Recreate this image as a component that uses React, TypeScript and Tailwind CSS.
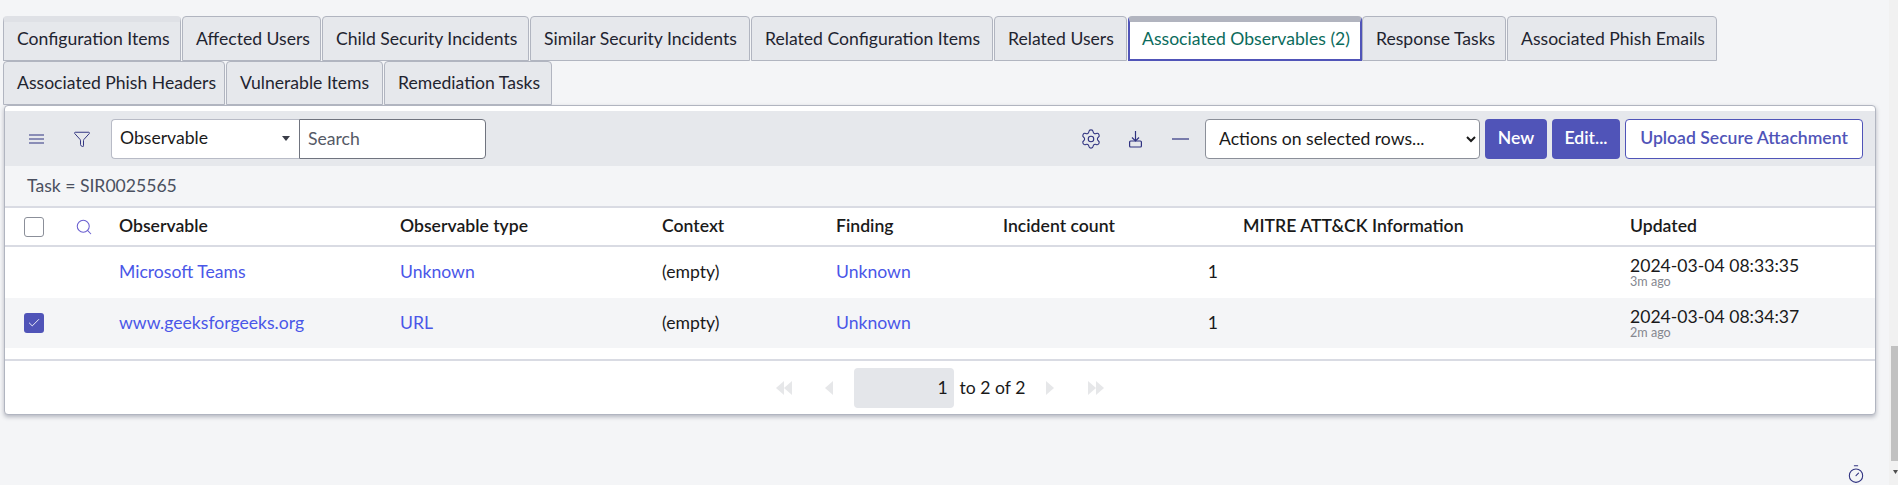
import React from 'react';
import { Funnel, Settings, Search, Timer, Check } from 'lucide-react';

const tabs = [
  { label: 'Configuration Items', width: 'w-[178px]' },
  { label: 'Affected Users', width: 'w-[139px]' },
  { label: 'Child Security Incidents', width: 'w-[207px]' },
  { label: 'Similar Security Incidents', width: 'w-[220px]' },
  { label: 'Related Configuration Items', width: 'w-[242px]' },
  { label: 'Related Users', width: 'w-[133px]' },
  { label: 'Associated Observables (2)', width: 'w-[234px]', active: true },
  { label: 'Response Tasks', width: 'w-[144px]' },
  { label: 'Associated Phish Emails', width: 'w-[210px]' },
  { label: 'Associated Phish Headers', width: 'w-[222px]' },
  { label: 'Vulnerable Items', width: 'w-[157px]' },
  { label: 'Remediation Tasks', width: 'w-[168px]' },
];

const rows = [
  { name: 'Microsoft Teams', type: 'Unknown', date: '2024-03-04 08:33:35', ago: '3m ago', checked: false },
  { name: 'www.geeksforgeeks.org', type: 'URL', date: '2024-03-04 08:34:37', ago: '2m ago', checked: true },
];

const Tab: React.FC<{ label: string; width: string; active?: boolean; first: boolean }> = ({ label, width, active, first }) => {
  if (active) {
    return (
      <div className={`${width} h-[44.5px] flex items-center pl-[12px] pb-[3px] whitespace-nowrap bg-white rounded-t-[4px] border-t-[6px] border-t-[#b1b4bf] border-x-2 border-b-2 border-x-[#5054b8] border-b-[#5054b8] text-[#0b6b5c]`}>
        {label}
      </div>
    );
  }
  return (
    <div
      className={`${width} h-[44.5px] flex items-center pl-[13px] whitespace-nowrap bg-[#e6e8ec] border border-[#b1b5c0] rounded-t-[4px] mr-px text-[#1f2430] ${
        first ? 'border-t-[6px] border-t-[#dfe1e6] pb-[4px]' : 'pt-px'
      }`}
    >
      {label}
    </div>
  );
};

const Triangle: React.FC<{ dir: 'l' | 'r' }> = ({ dir }) => (
  <svg width="8" height="14" viewBox="0 0 8 14" fill="#e6e7e9">
    <path d={dir === 'l' ? 'M8 0v14L0 7z' : 'M0 0v14l8-7z'} />
  </svg>
);

export default function App() {
  return (
    <div
      className="relative h-[485px] overflow-hidden bg-[#f4f5f7] flex text-[17.6px] text-[#1a1a1a]"
      style={{ fontFamily: 'Lato, "Noto Sans", sans-serif' }}
    >
      <div className="flex-1 pt-4 pl-[3px] pr-[13px]">
        <div className="flex flex-wrap">
          {tabs.map((t, i) => (
            <Tab key={t.label} label={t.label} width={t.width} active={t.active} first={i === 0} />
          ))}
        </div>

        <div className="ml-px bg-white border border-[#b1b5c0] rounded-[4px] shadow-[0_2px_4px_rgba(60,65,90,0.35)] h-[310px] pt-[5px]">
          <div className="h-[55px] bg-[#e6e8ec] flex items-center pr-[12px]">
            <svg className="ml-[24px] text-[#2f3280]" width="15" height="10" viewBox="0 0 15 10" fill="none" stroke="currentColor" strokeWidth="1.2">
              <path d="M0 1h15M0 5h15M0 9h15" />
            </svg>
            <Funnel className="ml-[29px] w-[18px] h-[18px] text-[#2f3280]" strokeWidth={1.3} />
            <div className="ml-[20px] w-[188px] h-10 bg-white border border-[#b8bbc6] border-r-0 rounded-l-[4px] flex items-center justify-between pl-2 pr-[9px]">
              <span>Observable</span>
              <svg width="8" height="5" viewBox="0 0 8 5" fill="#3a3d48">
                <path d="M0 0h8L4 5z" />
              </svg>
            </div>
            <input
              placeholder="Search"
              className="w-[187px] h-10 bg-white border border-[#70747f] rounded-r-[4px] px-2 outline-none placeholder:text-[#555a66]"
            />
            <div className="ml-auto flex items-center">
              <Settings className="w-[22px] h-[22px] text-[#2f3280]" strokeWidth={1.2} />
              <svg className="ml-[26px] text-[#2f3280]" width="15" height="18" viewBox="0 0 15 18" fill="none" stroke="currentColor" strokeWidth="1.2">
                <path d="M7.5 1v10M4 7.5l3.5 3.5L11 7.5" />
                <rect x="1.6" y="11" width="11.8" height="6" rx="1" />
              </svg>
              <svg className="ml-[29px] text-[#2f3280]" width="17" height="2" viewBox="0 0 17 2" stroke="currentColor" strokeWidth="1.2">
                <path d="M0 1h17" />
              </svg>
              <select className="ml-[16px] w-[275px] h-10 bg-white border border-[#8b8f99] rounded-[4px] pl-[9px] pr-[10px] text-[#1a1a1a]" defaultValue="a">
                <option value="a">Actions on selected rows...</option>
              </select>
              <button className="ml-[5px] w-[62px] h-10 bg-[#5054b8] text-white font-semibold rounded-[4px]">New</button>
              <button className="ml-[5px] w-[68px] h-10 bg-[#5054b8] text-white font-semibold rounded-[4px]">Edit...</button>
              <button className="ml-[5px] w-[238px] h-10 bg-white border border-[#5054b8] text-[#5054b8] font-semibold rounded-[4px]">
                Upload Secure Attachment
              </button>
            </div>
          </div>

          <div className="h-10 bg-[#f4f5f7] flex items-center pl-[22px] text-[#4a5060]">Task = SIR0025565</div>

          <table className="w-full table-fixed border-collapse">
            <colgroup>
              <col className="w-[58px]" />
              <col className="w-[44px]" />
              <col className="w-[281px]" />
              <col className="w-[262px]" />
              <col className="w-[174px]" />
              <col className="w-[167px]" />
              <col className="w-[240px]" />
              <col className="w-[387px]" />
              <col />
            </colgroup>
            <thead>
              <tr className="h-[39px] border-y-2 border-[#d9dbe3] text-left">
                <th className="pl-[19px]">
                  <div className="w-5 h-5 bg-white border border-[#8b8f99] rounded-[3px]" />
                </th>
                <th className="pl-[12px]">
                  <Search className="w-[18px] h-[18px] text-[#6a5fd0]" strokeWidth={1.4} />
                </th>
                <th className="pl-3 font-semibold">Observable</th>
                <th className="pl-3 font-semibold">Observable type</th>
                <th className="pl-3 font-semibold">Context</th>
                <th className="pl-3 font-semibold">Finding</th>
                <th className="pl-3 font-semibold">Incident count</th>
                <th className="pl-3 font-semibold">MITRE ATT&amp;CK Information</th>
                <th className="pl-3 font-semibold">Updated</th>
              </tr>
            </thead>
            <tbody>
              {rows.map((r, i) => (
                <tr key={r.name} className={i === 1 ? 'h-[50px] bg-[#f4f5f7]' : 'h-[52px] bg-white'}>
                  <td className="pl-[19px]">
                    {r.checked && (
                      <div className="w-5 h-5 bg-[#5054b8] rounded-[3px] flex items-center justify-center">
                        <Check className="w-[14px] h-[14px] text-white" strokeWidth={1.5} />
                      </div>
                    )}
                  </td>
                  <td />
                  <td className="pl-3 text-[#4a57e8]">{r.name}</td>
                  <td className="pl-3 text-[#4a57e8]">{r.type}</td>
                  <td className="pl-3">(empty)</td>
                  <td className="pl-3 text-[#4a57e8]">Unknown</td>
                  <td className="pr-[13px] text-right">1</td>
                  <td />
                  <td className="pl-3">
                    <div className="leading-[18px]">{r.date}</div>
                    <div className="text-[12.6px] leading-[13px] text-[#85878f]">{r.ago}</div>
                  </td>
                </tr>
              ))}
            </tbody>
          </table>

          <div className="mt-[11px] h-[56px] border-t-2 border-[#d9dbe3] flex items-center justify-center">
            <div className="flex items-center">
              <span className="flex"><Triangle dir="l" /><Triangle dir="l" /></span>
              <span className="ml-[33px] flex"><Triangle dir="l" /></span>
              <div className="ml-[21px] w-[100px] h-10 bg-[#e4e6ea] rounded-[4px] flex items-center justify-end pr-[6px]">1</div>
              <span className="ml-[6px]">to 2 of 2</span>
              <span className="ml-[21px] flex"><Triangle dir="r" /></span>
              <span className="ml-[34px] flex"><Triangle dir="r" /><Triangle dir="r" /></span>
            </div>
          </div>
        </div>
      </div>

      <div className="w-[9px] bg-[#f1f1f1] flex flex-col">
        <div className="mt-[346px] ml-[2px] h-[115px] bg-[#c1c1c1]" />
      </div>

      <Timer className="absolute left-[1846px] top-[464px] w-[20px] h-[20px] text-[#2f3280]" strokeWidth={1.3} />
      <svg className="absolute left-[1893px] top-[470px]" width="5" height="4" viewBox="0 0 5 4" fill="#505050">
        <path d="M0 0h5L2.5 4z" />
      </svg>
    </div>
  );
}
